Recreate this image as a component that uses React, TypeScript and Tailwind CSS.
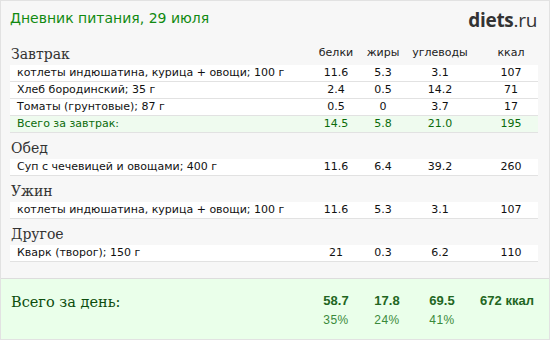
import React from 'react';

type Item = { name: string; p: string; f: string; c: string; kcal: string };
type Meal = { title: string; items: Item[]; total?: Item };

const MEALS: Meal[] = [
  {
    title: 'Завтрак',
    items: [
      { name: 'котлеты индюшатина, курица + овощи; 100 г', p: '11.6', f: '5.3', c: '3.1', kcal: '107' },
      { name: 'Хлеб бородинский; 35 г', p: '2.4', f: '0.5', c: '14.2', kcal: '71' },
      { name: 'Томаты (грунтовые); 87 г', p: '0.5', f: '0', c: '3.7', kcal: '17' },
    ],
    total: { name: 'Всего за завтрак:', p: '14.5', f: '5.8', c: '21.0', kcal: '195' },
  },
  {
    title: 'Обед',
    items: [{ name: 'Суп с чечевицей и овощами; 400 г', p: '11.6', f: '6.4', c: '39.2', kcal: '260' }],
  },
  {
    title: 'Ужин',
    items: [{ name: 'котлеты индюшатина, курица + овощи; 100 г', p: '11.6', f: '5.3', c: '3.1', kcal: '107' }],
  },
  {
    title: 'Другое',
    items: [{ name: 'Кварк (творог); 150 г', p: '21', f: '0.3', c: '6.2', kcal: '110' }],
  },
];

const sans = "font-['DejaVu_Sans','Noto_Sans',sans-serif]";
const serif = "font-['DejaVu_Serif','Liberation_Serif',serif]";

function Cols({ p, f, c, kcal }: { p: string; f: string; c: string; kcal: string }) {
  return (
    <>
      <span className="w-[48px] text-center">{p}</span>
      <span className="w-[46px] text-center">{f}</span>
      <span className="w-[68px] text-center">{c}</span>
      <span className="w-[64px] pl-[10px] text-center">{kcal}</span>
    </>
  );
}

function Row({ item, total }: { item: Item; total?: boolean }) {
  return (
    <div
      className={`flex items-center h-[17px] border-b border-[#e2e2e2] text-[11px] leading-[16px] ${sans} ${
        total ? 'bg-[#effbef] text-[#0b6b0b]' : 'bg-white text-[#111]'
      }`}
    >
      <span className="flex-1 pl-[7px] truncate">{item.name}</span>
      <Cols {...item} />
    </div>
  );
}

export default function App() {
  return (
    <div className="w-[550px] h-[340px] bg-[#f7f7f7] border border-[#e2e2e2] flex flex-col overflow-hidden">
      {/* Header */}
      <div className="flex justify-between items-start pl-[9px] pr-[12px] pt-[7px] h-[38px]">
        <h1 className={`text-[14px] leading-[20px] text-[#118a11] ${sans}`}>Дневник питания, 29 июля</h1>
        <div className="text-[19px] leading-[24px] text-[#333] font-['Open_Sans',sans-serif] tracking-[-0.3px]">
          <span className="font-bold">diets</span>
          <span>.ru</span>
        </div>
      </div>

      {/* Meals */}
      <div className="pl-[9px] pr-[11px]">
        {MEALS.map((meal, i) => (
          <div key={meal.title}>
            <div className="flex items-end h-[26px] pb-[2px]">
              <span className={`flex-1 pl-px text-[14px] leading-[18px] text-[#333] ${serif}`}>{meal.title}</span>
              {i === 0 && (
                <div className={`flex text-[11px] leading-[16px] text-[#222] pb-[2px] ${sans}`}>
                  <Cols p="белки" f="жиры" c="углеводы" kcal="ккал" />
                </div>
              )}
            </div>
            {meal.items.map((it, j) => (
              <Row key={j} item={it} />
            ))}
            {meal.total && <Row item={meal.total} total />}
          </div>
        ))}
      </div>

      {/* Day total */}
      <div className="mt-auto h-[61px] bg-[#eaffea] border-t border-[#dddddd] flex pl-[10px] pr-[11px] pt-[13px]">
        <span className={`flex-1 text-[14.5px] leading-[20px] text-[#0d4d0d] ${serif}`}>Всего за день:</span>
        <div className="flex flex-col font-['Liberation_Sans',Arial,sans-serif]">
          <div className="flex text-[13px] leading-[18px] font-bold text-[#226622]">
            <span className="w-[48px] text-center">58.7</span>
            <span className="w-[54px] text-center">17.8</span>
            <span className="w-[56px] text-center">69.5</span>
            <span className="w-[68px] text-center pl-[6px]">672 ккал</span>
          </div>
          <div className="flex text-[12px] leading-[18px] mt-[1px] text-[#3a8a3a] tracking-[0.5px]">
            <span className="w-[48px] text-center">35%</span>
            <span className="w-[54px] text-center">24%</span>
            <span className="w-[56px] text-center">41%</span>
            <span className="w-[68px]" />
          </div>
        </div>
      </div>
    </div>
  );
}
